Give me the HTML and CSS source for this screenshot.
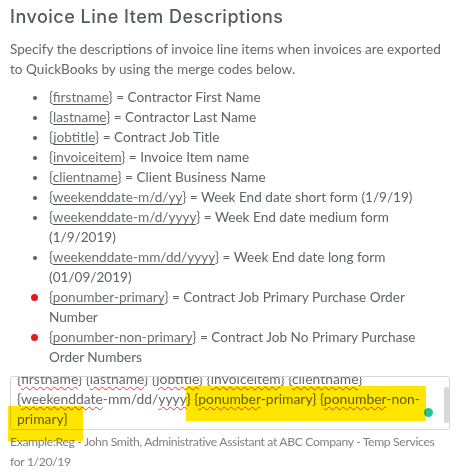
FILE: index.html
```html
<!DOCTYPE html>
<html lang="en">
  <head>
    <meta charset="UTF-8" />
    <meta name="viewport" content="width=device-width, initial-scale=1.0" />
    <title>Invoice Line Item Descriptions</title>
    <link rel="stylesheet" href="styles.css">
  </head>
  <body>
    <div class="section">
      <h2>Invoice Line Item Descriptions</h2>
      <p class="intro">
        Specify the descriptions of invoice line items when invoices are exported
        to QuickBooks by using the merge codes below.
      </p>
      <ul class="codes">
        <li><span class="code">{<u>firstname</u>}</span> = Contractor First Name</li>
        <li><span class="code">{<u>lastname</u>}</span> = Contractor Last Name</li>
        <li><span class="code">{<u>jobtitle</u>}</span> = Contract Job Title</li>
        <li><span class="code">{<u>invoiceitem</u>}</span> = Invoice Item name</li>
        <li><span class="code">{<u>clientname</u>}</span> = Client Business Name</li>
        <li><span class="code">{<u>weekenddate-m/d/yy</u>}</span> = Week End date short form (1/9/19)</li>
        <li><span class="code">{<u>weekenddate-m/d/yyyy</u>}</span> = Week End date medium form (1/9/2019)</li>
        <li><span class="code">{<u>weekenddate-mm/dd/yyyy</u>}</span> = Week End date long form (01/09/2019)</li>
        <li class="new"><span class="code">{<u>ponumber-primary</u>}</span> = Contract Job Primary Purchase Order Number</li>
        <li class="new"><span class="code">{<u>ponumber-non-primary</u>}</span> = Contract Job No Primary Purchase Order Numbers</li>
      </ul>

      <div class="editor">
        <div class="editor-box">
          <div class="editor-text">
            {<s>firstname</s>} {<s>lastname</s>} {<s>jobtitle</s>} {<s>invoiceitem</s>} {<s>clientname</s>}
            {<s>weekenddate</s>-mm/dd/<s>yyyy</s>} {<s>ponumber</s>-primary} {<s>ponumber</s>-non-primary}
          </div>
          <div class="scrollbar"></div>
          <span class="grammar-dot"></span>
        </div>
        <span class="mark mark-one"></span>
        <span class="mark mark-two"></span>
      </div>

      <p class="example">
        Example:Reg - John Smith, Administrative Assistant at ABC Company - Temp Services for 1/20/19
      </p>
    </div>
  </body>
</html>
```

FILE: styles.css
```css
* {
  box-sizing: border-box;
  margin: 0;
  padding: 0;
}

body {
  font-family: Lato, "Open Sans", sans-serif;
  color: #666;
  background: #fff;
  padding: 6px 6px 0 10px;
}

h2 {
  font-family: Inter, "Noto Sans", sans-serif;
  font-size: 18px;
  font-weight: 500;
  letter-spacing: 0.5px;
  color: #54595d;
  line-height: 22px;
  margin-bottom: 11px;
}

.intro {
  font-size: 13.6px;
  line-height: 20px;
  margin-bottom: 8px;
}

.codes {
  list-style: none;
  padding-left: 39px;
  font-size: 13.6px;
  line-height: 20px;
  color: #5f6366;
  margin-bottom: 9px;
}

.codes li {
  position: relative;
}

.codes li::before {
  content: "";
  position: absolute;
  left: -16px;
  top: 9px;
  width: 4px;
  height: 4px;
  border-radius: 50%;
  background: #5b5f62;
}

.codes li.new::before {
  left: -18px;
  top: 7px;
  width: 7px;
  height: 7px;
  background: #e41b1b;
}

.code {
  color: #6a6e71;
}

.code u {
  text-decoration-color: #555;
  text-underline-offset: 2px;
}

.editor {
  position: relative;
}

.editor-box {
  position: relative;
  height: 54px;
  border: 1px solid #d6d6d6;
  border-radius: 3px;
  overflow: hidden;
  padding: 0 8px 0 6px;
}

.editor-text {
  margin-top: -8px;
  font-size: 13.9px;
  line-height: 20px;
  color: #666;
}

.editor-text s {
  text-decoration: underline wavy #e33;
  text-decoration-thickness: 1px;
  text-underline-offset: 2px;
}

.scrollbar {
  position: absolute;
  right: 0;
  top: 10px;
  width: 5px;
  height: 36px;
  background: #d9d9d9;
  border-radius: 2px;
}

.grammar-dot {
  position: absolute;
  right: 16px;
  top: 31px;
  width: 9px;
  height: 9px;
  border-radius: 50%;
  background: #27c498;
}

.mark {
  position: absolute;
  background: #ffe600;
  mix-blend-mode: multiply;
}

.mark-one {
  left: 176px;
  top: 10px;
  width: 240px;
  height: 35px;
}

.mark-two {
  left: -2px;
  top: 30px;
  width: 75px;
  height: 35px;
}

.example {
  font-size: 12.2px;
  letter-spacing: -0.35px;
  line-height: 20px;
  color: #808080;
  margin-top: 2px;
}
```
